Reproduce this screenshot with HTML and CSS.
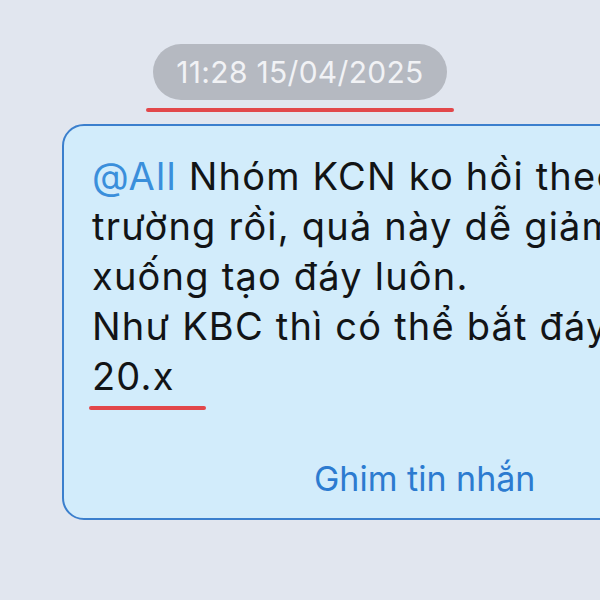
FILE: index.html
```html
<!DOCTYPE html>
<html lang="vi">
<head>
  <meta charset="UTF-8" />
  <title>Tin nhắn</title>
  <link rel="stylesheet" href="styles.css">
</head>
<body>
  <div class="stamp-row">
    <div class="stamp">11:28 15/04/2025</div>
    <div class="mark mark-wide"></div>
  </div>

  <div class="bubble">
    <div class="msg">
      <div class="line"><span class="mention">@All</span> Nhóm KCN ko hồi theo thị</div>
      <div class="line">trường rồi, quả này dễ giảm tiếp</div>
      <div class="line">xuống tạo đáy luôn.</div>
      <div class="line">Như KBC thì có thể bắt đáy vùng</div>
      <div class="line">20.x</div>
    </div>
    <div class="mark mark-short"></div>
    <div class="pin">Ghim tin nhắn</div>
  </div>
</body>
</html>
```

FILE: styles.css
```css
* {
  box-sizing: border-box;
}

body {
  margin: 0;
  width: 600px;
  height: 600px;
  overflow: hidden;
  background: #e1e6ef;
  font-family: Inter, "Noto Sans", sans-serif;
  padding-top: 44px;
}

.stamp-row {
  display: flex;
  flex-direction: column;
  align-items: center;
}

.stamp {
  width: 294px;
  height: 56px;
  border-radius: 28px;
  background: #b5b9c1;
  color: #f1f2f5;
  font-size: 30px;
  display: flex;
  align-items: center;
  justify-content: center;
  letter-spacing: 0.3px;
}

.mark {
  height: 4px;
  border-radius: 2px;
  background: #e2474a;
}

.mark-wide {
  width: 308px;
  margin-top: 8px;
}

.bubble {
  margin: 12px 0 0 62px;
  width: 620px;
  height: 396px;
  background: #d2ecfb;
  border: 2px solid #3b7fcd;
  border-radius: 22px;
  padding: 25px 0 0 28px;
  overflow: hidden;
}

.msg {
  font-size: 38px;
  line-height: 50px;
  letter-spacing: 1.2px;
  color: #121416;
  white-space: nowrap;
}

.mention {
  color: #3a8fdb;
}

.mark-short {
  width: 117px;
  margin: 5px 0 0 -3px;
}

.pin {
  margin: 48px 0 0 222px;
  font-size: 34px;
  color: #2c7bd0;
}
```
